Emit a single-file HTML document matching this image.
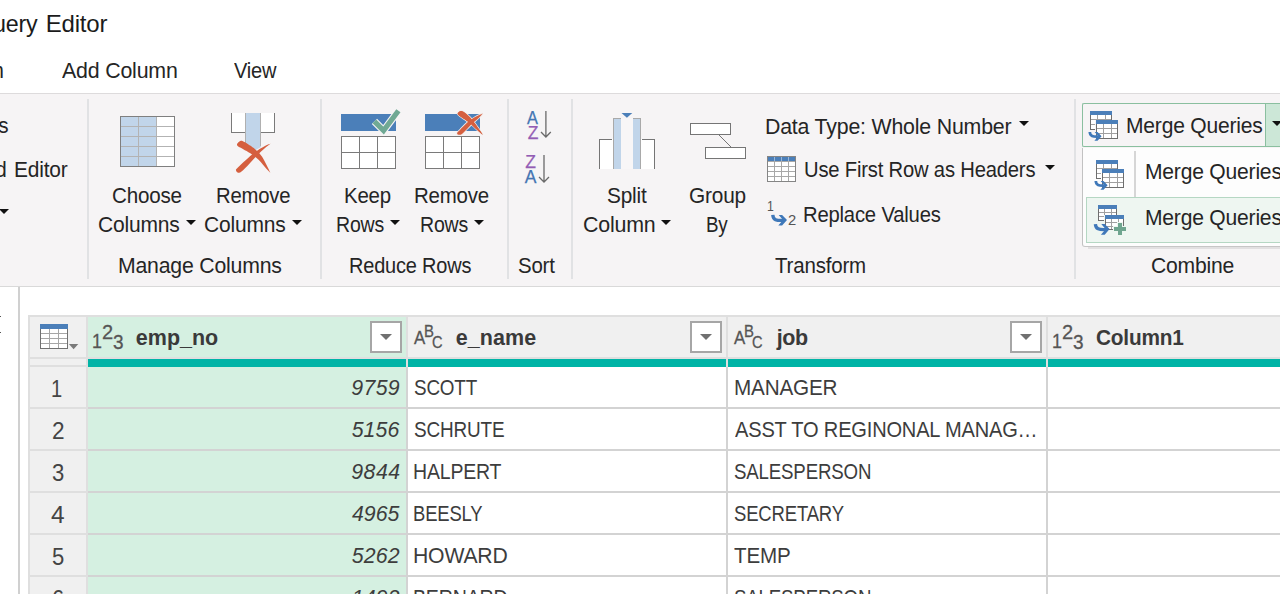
<!DOCTYPE html>
<html lang="en">
<head>
<meta charset="utf-8">
<title>Power Query Editor</title>
<style>
html,body{margin:0;padding:0;overflow:hidden;background:#fff;}
body{width:1280px;height:594px;}
#app{position:relative;width:1280px;height:594px;overflow:hidden;background:#fff;font-family:"Liberation Sans",sans-serif;}
.t{position:absolute;white-space:nowrap;line-height:1;transform-origin:0 0;}
.abs{position:absolute;}
#ribbon{left:0;top:93px;width:1280px;height:192px;background:#f6f4f5;border-top:1px solid #dddbdc;border-bottom:1px solid #d9d9d9;box-sizing:content-box;}
.vsep{position:absolute;top:99px;height:180px;width:2px;background:#e1e2e4;}
#leftline{left:18px;top:287px;width:2px;height:307px;background:#d0d0d0;}
#grid{left:28px;top:315px;width:1252px;height:279px;background:#dfdfdf;}
#gridh{left:88px;top:367px;width:1192px;height:227px;background:#d3d3d3;}
.hc{position:absolute;top:317px;height:40px;background:#f0f0f0;}
.cell{position:absolute;height:40px;background:#fff;}
.sel{background:#d5f0e1;}
.rh{position:absolute;left:30px;width:56px;height:40px;background:#f0f0f0;}
.dd{position:absolute;top:321px;width:28px;height:28px;border:2px solid #a6a6a6;background:#fff;}
.dd:after{content:"";position:absolute;left:8px;top:11px;border-left:6px solid transparent;border-right:6px solid transparent;border-top:6px solid #707070;}
.car{position:absolute;width:0;height:0;border-left:5px solid transparent;border-right:5px solid transparent;border-top:5px solid #111;}
</style>
</head>
<body>
<div id="app">
<div id="ribbon" class="abs"></div>
<div class="vsep" style="left:87px"></div>
<div class="vsep" style="left:320px"></div>
<div class="vsep" style="left:507px"></div>
<div class="vsep" style="left:571px"></div>
<div class="vsep" style="left:1074px"></div>
<div id="leftline" class="abs"></div>
<div class="abs" style="left:0;top:316px;width:1.3px;height:1.2px;background:#555"></div>
<div class="abs" style="left:0;top:332px;width:1.3px;height:1.2px;background:#555"></div>

<!-- merge queries split button + dropdown -->
<div class="abs" style="left:1082px;top:103px;width:198px;height:44px;box-sizing:border-box;border:1px solid #8abf9f;border-right:none;border-radius:2px 0 0 2px;background:#f6f4f5"></div>
<div class="abs" style="left:1265px;top:103px;width:15px;height:44px;box-sizing:border-box;border-top:1px solid #8abf9f;border-bottom:1px solid #8abf9f;border-left:1px solid #8abf9f;background:#cce7d7"></div>
<div class="abs" style="left:1088px;top:247px;width:192px;height:2px;background:#e2e0e1"></div>
<div class="abs" style="left:1082px;top:148px;width:210px;height:99px;box-sizing:border-box;background:#fdfdfd;border-left:1px solid #c2c2c2;border-bottom:1px solid #c6c6c6;border-radius:0 0 0 3px;"></div>
<div class="abs" style="left:1134px;top:151px;width:2px;height:46px;background:#d6d6d6"></div>
<div class="abs" style="left:1086px;top:197px;width:200px;height:46px;box-sizing:border-box;border:1px solid #b5d7c3;background:#eef6f1"></div>

<!-- data grid -->
<div id="grid" class="abs"></div>
<div id="gridh" class="abs"></div>
<div class="hc" style="left:30px;width:56px"></div>
<div class="hc sel" style="left:88px;width:318px"></div>
<div class="hc" style="left:408px;width:318px"></div>
<div class="hc" style="left:728px;width:318px"></div>
<div class="hc" style="left:1048px;width:232px"></div>
<div class="abs" style="left:30px;top:359px;width:56px;height:6px;background:#f0f0f0"></div>
<div class="abs" style="left:88px;top:359px;width:318px;height:8px;background:#00b4a6"></div>
<div class="abs" style="left:408px;top:359px;width:318px;height:8px;background:#00b4a6"></div>
<div class="abs" style="left:728px;top:359px;width:318px;height:8px;background:#00b4a6"></div>
<div class="abs" style="left:1048px;top:359px;width:232px;height:8px;background:#00b4a6"></div>
<div class="rh" style="top:367px"></div>
<div class="cell sel" style="left:88px;top:367px;width:318px"></div>
<div class="cell" style="left:408px;top:367px;width:318px"></div>
<div class="cell" style="left:728px;top:367px;width:318px"></div>
<div class="cell" style="left:1048px;top:367px;width:232px"></div>
<div class="rh" style="top:409px"></div>
<div class="cell sel" style="left:88px;top:409px;width:318px"></div>
<div class="cell" style="left:408px;top:409px;width:318px"></div>
<div class="cell" style="left:728px;top:409px;width:318px"></div>
<div class="cell" style="left:1048px;top:409px;width:232px"></div>
<div class="rh" style="top:451px"></div>
<div class="cell sel" style="left:88px;top:451px;width:318px"></div>
<div class="cell" style="left:408px;top:451px;width:318px"></div>
<div class="cell" style="left:728px;top:451px;width:318px"></div>
<div class="cell" style="left:1048px;top:451px;width:232px"></div>
<div class="rh" style="top:493px"></div>
<div class="cell sel" style="left:88px;top:493px;width:318px"></div>
<div class="cell" style="left:408px;top:493px;width:318px"></div>
<div class="cell" style="left:728px;top:493px;width:318px"></div>
<div class="cell" style="left:1048px;top:493px;width:232px"></div>
<div class="rh" style="top:535px"></div>
<div class="cell sel" style="left:88px;top:535px;width:318px"></div>
<div class="cell" style="left:408px;top:535px;width:318px"></div>
<div class="cell" style="left:728px;top:535px;width:318px"></div>
<div class="cell" style="left:1048px;top:535px;width:232px"></div>
<div class="rh" style="top:577px"></div>
<div class="cell sel" style="left:88px;top:577px;width:318px"></div>
<div class="cell" style="left:408px;top:577px;width:318px"></div>
<div class="cell" style="left:728px;top:577px;width:318px"></div>
<div class="cell" style="left:1048px;top:577px;width:232px"></div>
<div class="dd" style="left:370px"></div>
<div class="dd" style="left:690px"></div>
<div class="dd" style="left:1010px"></div>

<!-- carets -->
<div class="car" style="left:186px;top:220px"></div>
<div class="car" style="left:292px;top:220px"></div>
<div class="car" style="left:390px;top:220px"></div>
<div class="car" style="left:474px;top:220px"></div>
<div class="car" style="left:661px;top:220px"></div>
<div class="car" style="left:1018.5px;top:121px"></div>
<div class="car" style="left:1044.5px;top:165px"></div>
<div class="car" style="left:-1px;top:209px"></div>
<div class="car" style="left:1272.3px;top:121px"></div>

<svg class="abs" style="left:0;top:0" width="1280" height="594" viewBox="0 0 1280 594">
<g shape-rendering="crispEdges">
<!-- Choose Columns -->
<rect x="120" y="116" width="55" height="51" fill="#fff"/>
<rect x="120" y="116" width="37" height="51" fill="#c1d5ea"/>
<g stroke="#b3b3b3" stroke-width="1" fill="none">
<path d="M138.5 116V167M156.5 116V167M120 126.5H175M120 136.5H175M120 146.5H175M120 156.5H175"/>
</g>
<rect x="120.5" y="116.5" width="54" height="50" fill="none" stroke="#7f7f7f" stroke-width="1"/>

<!-- Remove Columns: boxes -->
<rect x="231" y="113" width="44" height="19.5" fill="#fff"/>
<path d="M231.5 113V132.5H274.5V113" fill="none" stroke="#7a7a7a" stroke-width="1"/>
</g>
<path d="M245 113H261V147L253 151.5L245 147Z" fill="#c1d5ea"/>
<path d="M245.5 113V146M260.5 113V146" stroke="#b0b0b0" stroke-width="1" fill="none"/>
<rect x="246" y="131.5" width="14" height="2" fill="#c1d5ea"/>
<!-- red X -->
<path d="M237.14 143.87C237.54 142.99 239.11 141.22 240.32 140.92C241.54 140.63 241.99 140.73 244.45 142.10C246.90 143.48 252.10 146.72 255.05 149.17C257.99 151.62 259.56 152.90 262.11 156.83C264.67 160.75 268.71 169.55 270.36 172.73C269.65 172.02 268.79 171.35 266.83 169.19C264.86 167.03 261.33 162.42 258.58 159.77C255.83 157.12 252.89 155.06 250.34 153.29C247.78 151.53 245.33 150.35 243.27 149.17C241.21 147.99 238.99 147.11 237.97 146.22C236.95 145.34 236.75 144.75 237.14 143.87Z" fill="#d55f3f"/>
<path d="M270.59 143.87C269.37 144.34 267.06 144.85 264.47 146.22C261.88 147.60 258.19 149.76 255.05 152.11C251.91 154.47 248.57 157.71 245.62 160.36C242.68 163.01 238.99 166.35 237.38 168.02C235.77 169.68 235.87 169.59 235.97 170.37C236.06 171.16 237.05 172.53 237.97 172.73C238.89 172.92 239.64 173.02 241.50 171.55C243.37 170.08 246.51 166.64 249.16 163.89C251.81 161.14 254.85 157.61 257.40 155.06C259.95 152.51 262.27 150.45 264.47 148.58C266.67 146.72 269.37 144.81 270.59 143.87Z" fill="#d55f3f"/>

<g shape-rendering="crispEdges">
<!-- Keep Rows -->
<rect x="341" y="114" width="55" height="17" fill="#4b7fb9"/>
<rect x="341.5" y="136.5" width="54" height="32" fill="#fff" stroke="#7a7a7a" stroke-width="1"/>
<path d="M359.5 136V169M377.5 136V169M341 152.5H396" stroke="#7a7a7a" stroke-width="1" fill="none"/>
<!-- Remove Rows -->
<rect x="425" y="114" width="55" height="17" fill="#4b7fb9"/>
<rect x="425.5" y="136.5" width="54" height="32" fill="#fff" stroke="#7a7a7a" stroke-width="1"/>
<path d="M443.5 136V169M461.5 136V169M425 152.5H480" stroke="#7a7a7a" stroke-width="1" fill="none"/>
</g>
<!-- check -->
<path d="M374.4 121.4L383.6 130.6L398.4 110.8" fill="none" stroke="#f6f4f5" stroke-width="7.4" stroke-linejoin="miter"/>
<path d="M374.4 121.4L383.6 130.6L398.4 110.8" fill="none" stroke="#70a994" stroke-width="5.2" stroke-linejoin="miter"/>
<!-- red X small -->
<path d="M457.64 113.55C457.64 112.66 459.41 111.48 460.35 111.19C461.29 110.90 461.62 110.70 463.29 111.78C464.96 112.86 468.20 115.41 470.36 117.67C472.52 119.93 474.19 122.48 476.25 125.32C478.31 128.17 481.43 132.86 482.73 134.75C482.02 134.16 481.06 133.47 479.19 131.80C477.33 130.13 473.79 126.70 471.54 124.73C469.28 122.77 467.51 121.40 465.65 120.02C463.78 118.65 461.68 117.57 460.35 116.49C459.01 115.41 457.64 114.43 457.64 113.55Z" fill="#d55f3f" stroke="#f1e9e6" stroke-width="1.6" paint-order="stroke"/>
<path d="M482.73 113.55C481.20 114.25 477.72 115.51 475.07 117.08C472.42 118.65 469.28 120.91 466.83 122.97C464.37 125.03 461.96 127.78 460.35 129.45C458.74 131.12 457.46 132.10 457.17 132.98C456.87 133.86 457.80 134.59 458.58 134.75C459.37 134.90 460.39 134.98 461.88 133.92C463.37 132.86 465.61 130.27 467.53 128.39C469.46 126.50 471.48 124.42 473.42 122.61C475.37 120.81 477.64 119.06 479.19 117.55C480.74 116.04 482.02 114.35 482.73 113.55Z" fill="#d55f3f" stroke="#f1e9e6" stroke-width="1.6" paint-order="stroke"/>
<path d="M457.64 113.55C457.64 112.66 459.41 111.48 460.35 111.19C461.29 110.90 461.62 110.70 463.29 111.78C464.96 112.86 468.20 115.41 470.36 117.67C472.52 119.93 474.19 122.48 476.25 125.32C478.31 128.17 481.43 132.86 482.73 134.75C482.02 134.16 481.06 133.47 479.19 131.80C477.33 130.13 473.79 126.70 471.54 124.73C469.28 122.77 467.51 121.40 465.65 120.02C463.78 118.65 461.68 117.57 460.35 116.49C459.01 115.41 457.64 114.43 457.64 113.55Z" fill="#d55f3f"/>

<!-- Sort arrows -->
<g stroke="#6a6a6a" stroke-width="1.3" fill="none">
<path d="M545.9 111V136.8M541 132L545.9 137L550.8 132"/>
<path d="M544 155V181.8M539 177L544 182L549 177"/>
</g>

<!-- Split Column -->
<path d="M621.5 113H632.3L626.9 117.8Z" fill="#4b7fb9"/>
<g shape-rendering="crispEdges">
<rect x="599" y="139" width="14" height="29.5" fill="#fff"/>
<rect x="641" y="139" width="14" height="29.5" fill="#fff"/>
<rect x="613" y="118" width="8" height="50.5" fill="#c1d5ea"/>
<rect x="633" y="118" width="8" height="50.5" fill="#c1d5ea"/>
<rect x="621" y="118" width="12" height="50.5" fill="#f8f6f7"/>
<path d="M599.5 168.5V139.5H612M642 139.5H654.5V168.5" fill="none" stroke="#757575" stroke-width="1"/>
<path d="M613.5 168.5V118.5H621M633 118.5H640.5V168.5" fill="none" stroke="#a9a9a9" stroke-width="1"/>
<!-- Group By -->
<rect x="690.5" y="123.5" width="40" height="11" fill="#fff" stroke="#757575" stroke-width="1"/>
<rect x="705.5" y="147.5" width="40" height="11" fill="#fff" stroke="#757575" stroke-width="1"/>
</g>
<path d="M719 135L731 147" stroke="#757575" stroke-width="1" fill="none"/>

<!-- Use first row as headers -->
<g shape-rendering="crispEdges">
<rect x="767" y="156" width="29" height="26" fill="#fff"/>
<rect x="767" y="156" width="29" height="5" fill="#4b7fb9"/>
<path d="M774.5 156V182M781.5 156V182M788.5 156V182M767 161.5H796M767 166.500H796M767 171.5H796M767 176.5H796" stroke="#a8a8a8" stroke-width="1" fill="none"/>
<rect x="767.500" y="156.500" width="28" height="25" fill="none" stroke="#858585" stroke-width="1"/>
<rect x="768" y="157" width="27" height="4" fill="none"/>
</g>
<path d="M774.5 157V161M781.5 157V161M788.5 157V161" stroke="#9ab6d8" stroke-width="1" fill="none" shape-rendering="crispEdges"/>


<g shape-rendering="crispEdges">
<rect x="1090" y="111" width="22" height="18.5" fill="#fff"/>
<rect x="1090" y="111" width="22" height="4" fill="#4b7fb9"/>
<path d="M1097.5 115V129.5M1105.5 115V129.5M1090 119.5H1112M1090 124.5H1112" stroke="#a0a0a0" stroke-width="1" fill="none"/>
<path d="M1090.5 115V129.5H1111.5V115" stroke="#6e6e6e" stroke-width="1" fill="none"/>
<rect x="1095" y="120" width="24" height="19.5" fill="#f6f4f5"/>
<rect x="1096" y="120" width="22" height="18.5" fill="#fff"/>
<rect x="1096" y="120" width="22" height="4" fill="#4b7fb9"/>
<path d="M1103.5 124V138.5M1111.5 124V138.5M1096 128.5H1118M1096 133.5H1118" stroke="#a0a0a0" stroke-width="1" fill="none"/>
<path d="M1096.5 124V138.5H1117.5V124" stroke="#6e6e6e" stroke-width="1" fill="none"/>
</g>
<path d="M1089.81 132.05C1089.98 136.12 1092.80 136.95 1098.61 136.61" fill="none" stroke="#3f78b9" stroke-width="2.74"/>
<path d="M1094.71 132.05L1097.53 132.05L1101.60 136.20L1097.53 140.85L1094.38 140.85L1098.28 136.37Z" fill="#3f78b9"/>
<g shape-rendering="crispEdges">
<rect x="1096" y="160" width="22" height="18.5" fill="#fff"/>
<rect x="1096" y="160" width="22" height="4" fill="#4b7fb9"/>
<path d="M1103.5 164V178.5M1111.5 164V178.5M1096 168.5H1118M1096 173.5H1118" stroke="#a0a0a0" stroke-width="1" fill="none"/>
<path d="M1096.5 164V178.5H1117.5V164" stroke="#6e6e6e" stroke-width="1" fill="none"/>
<rect x="1101" y="169" width="24" height="19.5" fill="#fdfdfd"/>
<rect x="1102" y="169" width="22" height="18.5" fill="#fff"/>
<rect x="1102" y="169" width="22" height="4" fill="#4b7fb9"/>
<path d="M1109.5 173V187.5M1117.5 173V187.5M1102 177.5H1124M1102 182.5H1124" stroke="#a0a0a0" stroke-width="1" fill="none"/>
<path d="M1102.5 173V187.5H1123.5V173" stroke="#6e6e6e" stroke-width="1" fill="none"/>
</g>
<path d="M1095.81 181.05C1095.98 185.12 1098.80 185.95 1104.61 185.61" fill="none" stroke="#3f78b9" stroke-width="2.74"/>
<path d="M1100.71 181.05L1103.53 181.05L1107.60 185.20L1103.53 189.85L1100.38 189.85L1104.28 185.37Z" fill="#3f78b9"/>
<g shape-rendering="crispEdges">
<rect x="1098" y="205" width="19" height="15.5" fill="#fff"/>
<rect x="1098" y="205" width="19" height="4" fill="#4b7fb9"/>
<path d="M1104.5 209V220.5M1111.5 209V220.5M1098 212.5H1117M1098 216.5H1117" stroke="#a0a0a0" stroke-width="1" fill="none"/>
<path d="M1098.5 209V220H1116.5V209" stroke="#6e6e6e" stroke-width="1" fill="none"/>
<rect x="1104" y="215" width="21" height="16" fill="#eef6f1"/>
<rect x="1105" y="215" width="19" height="15" fill="#fff"/>
<rect x="1105" y="215" width="19" height="4" fill="#4b7fb9"/>
<path d="M1111.5 219V230M1118.5 219V230M1105 222.5H1124M1105 226.5H1124" stroke="#a0a0a0" stroke-width="1" fill="none"/>
<path d="M1105.5 219V229.5H1123.5V219" stroke="#6e6e6e" stroke-width="1" fill="none"/>
<rect x="1117.2" y="222" width="6" height="14" fill="#eef6f1"/>
<rect x="1113.2" y="226" width="14" height="6" fill="#eef6f1"/>
<rect x="1118.2" y="223" width="4" height="12" fill="#6fa58f"/>
<rect x="1114.2" y="227" width="12" height="4" fill="#6fa58f"/>
</g>
<path d="M1095.40 224.10C1095.60 229.00 1099.00 230.00 1106.00 229.60" fill="none" stroke="#3f78b9" stroke-width="3.30"/>
<path d="M1101.30 224.10L1104.70 224.10L1109.60 229.10L1104.70 234.70L1100.90 234.70L1105.60 229.30Z" fill="#3f78b9"/>
<g shape-rendering="crispEdges">
<rect x="40" y="324" width="28" height="25" fill="#fff"/>
<rect x="40" y="324" width="28" height="5" fill="#4b7fb9"/>
<path d="M49.5 329V349M58.5 329V349M40 333.5H68M40 338.5H68M40 343.5H68" stroke="#a6a6a6" stroke-width="1" fill="none"/>
<path d="M40.5 329V348.500H67.500V329" stroke="#707070" stroke-width="1" fill="none"/>
</g>
<path d="M68.900 344H78.300L73.600 349.200Z" fill="#7a7a7a"/>
<path d="M772.80 214.90C773.00 219.80 776.40 220.80 783.40 220.40" fill="none" stroke="#3f78b9" stroke-width="3.30"/>
<path d="M778.70 214.90L782.10 214.90L787.00 219.90L782.10 225.50L778.30 225.50L783.00 220.10Z" fill="#3f78b9"/>
</svg>
<span class="t" style="left:45.73px;top:11.5px;font-size:24px;color:#1b1b1b;letter-spacing:-0.181px;">Editor</span>
<span class="t" style="left:-24.72px;top:11.5px;font-size:24px;color:#1b1b1b;letter-spacing:-0.2px;transform:scaleX(0.97);">Query</span>
<span class="t" style="left:61.6px;top:59.7px;font-size:22px;color:#252525;letter-spacing:-0.2px;transform:scaleX(0.9709);">Add Column</span>
<span class="t" style="left:233.7px;top:59.7px;font-size:22px;color:#252525;letter-spacing:-0.2px;transform:scaleX(0.9115);">View</span>
<span class="t" style="left:-89.05px;top:59.7px;font-size:22px;color:#252525;letter-spacing:-0.2px;transform:scaleX(0.95);">Transform</span>
<span class="t" style="left:-83.61px;top:115.2px;font-size:22px;color:#252525;letter-spacing:-0.2px;transform:scaleX(0.94);">Properties</span>
<span class="t" style="left:14.37px;top:159.4px;font-size:22px;color:#252525;letter-spacing:-0.2px;transform:scaleX(0.9498);">Editor</span>
<span class="t" style="left:-84.3px;top:159.4px;font-size:22px;color:#252525;letter-spacing:-0.2px;transform:scaleX(0.94);">Advanced</span>
<span class="t" style="left:112.44px;top:184.6px;font-size:22px;color:#252525;letter-spacing:-0.2px;transform:scaleX(0.9354);">Choose</span>
<span class="t" style="left:98.32px;top:214.4px;font-size:22px;color:#252525;letter-spacing:-0.2px;transform:scaleX(0.9548);">Columns</span>
<span class="t" style="left:215.72px;top:184.6px;font-size:22px;color:#252525;letter-spacing:-0.2px;transform:scaleX(0.9207);">Remove</span>
<span class="t" style="left:204.27px;top:214.4px;font-size:22px;color:#252525;letter-spacing:-0.2px;transform:scaleX(0.9542);">Columns</span>
<span class="t" style="left:118.34px;top:254.7px;font-size:22px;color:#252525;letter-spacing:-0.2px;transform:scaleX(0.9653);">Manage Columns</span>
<span class="t" style="left:344.41px;top:184.6px;font-size:22px;color:#252525;letter-spacing:-0.2px;transform:scaleX(0.928);">Keep</span>
<span class="t" style="left:335.78px;top:214.4px;font-size:22px;color:#252525;letter-spacing:-0.2px;transform:scaleX(0.8865);">Rows</span>
<span class="t" style="left:414.3px;top:184.6px;font-size:22px;color:#252525;letter-spacing:-0.2px;transform:scaleX(0.9284);">Remove</span>
<span class="t" style="left:419.68px;top:214.4px;font-size:22px;color:#252525;letter-spacing:-0.2px;transform:scaleX(0.8865);">Rows</span>
<span class="t" style="left:349.44px;top:254.7px;font-size:22px;color:#252525;letter-spacing:-0.2px;transform:scaleX(0.9076);">Reduce Rows</span>
<span class="t" style="left:518.06px;top:254.7px;font-size:22px;color:#252525;letter-spacing:-0.2px;transform:scaleX(0.9276);">Sort</span>
<span class="t" style="left:606.95px;top:184.6px;font-size:22px;color:#252525;letter-spacing:-0.2px;transform:scaleX(0.9472);">Split</span>
<span class="t" style="left:582.8px;top:214.4px;font-size:22px;color:#252525;letter-spacing:-0.2px;transform:scaleX(0.9719);">Column</span>
<span class="t" style="left:688.82px;top:184.6px;font-size:22px;color:#252525;letter-spacing:-0.2px;transform:scaleX(0.9466);">Group</span>
<span class="t" style="left:706.23px;top:214.4px;font-size:22px;color:#252525;letter-spacing:-0.2px;transform:scaleX(0.8546);">By</span>
<span class="t" style="left:765.13px;top:115.5px;font-size:22px;color:#252525;letter-spacing:-0.2px;transform:scaleX(0.9692);">Data Type: Whole Number</span>
<span class="t" style="left:803.54px;top:159.4px;font-size:22px;color:#252525;letter-spacing:-0.2px;transform:scaleX(0.9181);">Use First Row as Headers</span>
<span class="t" style="left:803.22px;top:203.5px;font-size:22px;color:#252525;letter-spacing:-0.2px;transform:scaleX(0.9196);">Replace Values</span>
<span class="t" style="left:774.88px;top:254.7px;font-size:22px;color:#252525;letter-spacing:-0.2px;transform:scaleX(0.9321);">Transform</span>
<span class="t" style="left:1126.16px;top:115.4px;font-size:22px;color:#252525;letter-spacing:-0.2px;transform:scaleX(0.956);">Merge Queries</span>
<span class="t" style="left:1144.76px;top:160.9px;font-size:22px;color:#252525;letter-spacing:-0.2px;transform:scaleX(0.9567);">Merge Queries</span>
<span class="t" style="left:1144.76px;top:206.5px;font-size:22px;color:#252525;letter-spacing:-0.2px;transform:scaleX(0.9567);">Merge Queries</span>
<span class="t" style="left:1150.81px;top:254.7px;font-size:22px;color:#252525;letter-spacing:-0.2px;transform:scaleX(0.9597);">Combine</span>
<span class="t" style="left:527.2px;top:109.6px;font-size:17.5px;color:#4576b3;transform:scaleX(0.9355);-webkit-text-stroke:0.25px #4576b3;">A</span>
<span class="t" style="left:527.63px;top:124.7px;font-size:17.5px;color:#935cb4;-webkit-text-stroke:0.25px #935cb4;">Z</span>
<span class="t" style="left:525.33px;top:153.7px;font-size:17.5px;color:#935cb4;-webkit-text-stroke:0.25px #935cb4;">Z</span>
<span class="t" style="left:524.82px;top:168.8px;font-size:17.5px;color:#4576b3;-webkit-text-stroke:0.25px #4576b3;">A</span>
<span class="t" style="left:767.27px;top:198.6px;font-size:14px;color:#555;transform:scaleX(0.8742);">1</span>
<span class="t" style="left:788.47px;top:213.4px;font-size:14px;color:#555;transform:scaleX(1.0563);">2</span>
<span class="t" style="left:135.83px;top:327.9px;font-size:21.5px;color:#3a3a3a;letter-spacing:-0.011px;font-weight:bold;">emp_no</span>
<span class="t" style="left:455.73px;top:327.9px;font-size:21.5px;color:#3a3a3a;letter-spacing:0.086px;font-weight:bold;">e_name</span>
<span class="t" style="left:776.64px;top:327.9px;font-size:21.5px;color:#3a3a3a;letter-spacing:-0.336px;font-weight:bold;">job</span>
<span class="t" style="left:1096.35px;top:327.9px;font-size:21.5px;color:#3a3a3a;letter-spacing:-0.2px;transform:scaleX(0.968);font-weight:bold;">Column1</span>
<span class="t" style="left:91.74px;top:329.8px;font-size:21px;color:#555555;transform:scaleX(0.85);-webkit-text-stroke:0.3px #555;">1</span>
<span class="t" style="left:101.86px;top:320.9px;font-size:21px;color:#555555;transform:scaleX(0.9549);-webkit-text-stroke:0.3px #555;">2</span>
<span class="t" style="left:112.61px;top:331.0px;font-size:21px;color:#555555;transform:scaleX(0.9045);-webkit-text-stroke:0.3px #555;">3</span>
<span class="t" style="left:1051.74px;top:329.8px;font-size:21px;color:#555555;transform:scaleX(0.85);-webkit-text-stroke:0.3px #555;">1</span>
<span class="t" style="left:1061.86px;top:320.9px;font-size:21px;color:#555555;transform:scaleX(0.9549);-webkit-text-stroke:0.3px #555;">2</span>
<span class="t" style="left:1072.61px;top:331.0px;font-size:21px;color:#555555;transform:scaleX(0.9045);-webkit-text-stroke:0.3px #555;">3</span>
<span class="t" style="left:413.5px;top:329.8px;font-size:17.6px;color:#555555;transform:scaleX(0.9556);-webkit-text-stroke:0.3px #555;">A</span>
<span class="t" style="left:424.11px;top:323.5px;font-size:15.6px;color:#555555;transform:scaleX(0.9552);-webkit-text-stroke:0.3px #555;">B</span>
<span class="t" style="left:431.88px;top:334.1px;font-size:17.2px;color:#555555;transform:scaleX(0.85);-webkit-text-stroke:0.3px #555;">C</span>
<span class="t" style="left:733.5px;top:329.8px;font-size:17.6px;color:#555555;transform:scaleX(0.9556);-webkit-text-stroke:0.3px #555;">A</span>
<span class="t" style="left:744.11px;top:323.5px;font-size:15.6px;color:#555555;transform:scaleX(0.9552);-webkit-text-stroke:0.3px #555;">B</span>
<span class="t" style="left:751.88px;top:334.1px;font-size:17.2px;color:#555555;transform:scaleX(0.85);-webkit-text-stroke:0.3px #555;">C</span>
<span class="t" style="left:351.33px;top:377.7px;font-size:21.3px;color:#3d3d3d;letter-spacing:0.326px;font-style:italic;">9759</span>
<span class="t" style="left:414.01px;top:376.7px;font-size:22px;color:#3d3d3d;letter-spacing:-0.2px;transform:scaleX(0.8571);">SCOTT</span>
<span class="t" style="left:734.18px;top:376.7px;font-size:22px;color:#3d3d3d;letter-spacing:-0.2px;transform:scaleX(0.94);">MANAGER</span>
<span class="t" style="left:51.43px;top:378.2px;font-size:23.7px;color:#444;transform:scaleX(0.85);">1</span>
<span class="t" style="left:351.67px;top:419.7px;font-size:21.3px;color:#3d3d3d;letter-spacing:0.104px;font-style:italic;">5156</span>
<span class="t" style="left:414.01px;top:418.7px;font-size:22px;color:#3d3d3d;letter-spacing:-0.2px;transform:scaleX(0.8611);">SCHRUTE</span>
<span class="t" style="left:735.0px;top:418.7px;font-size:22px;color:#3d3d3d;letter-spacing:-0.2px;transform:scaleX(0.9116);">ASST TO REGINONAL MANAG…</span>
<span class="t" style="left:51.64px;top:420.2px;font-size:23.7px;color:#444;transform:scaleX(0.9541);">2</span>
<span class="t" style="left:351.33px;top:461.7px;font-size:21.3px;color:#3d3d3d;letter-spacing:0.437px;font-style:italic;">9844</span>
<span class="t" style="left:413.08px;top:460.7px;font-size:22px;color:#3d3d3d;letter-spacing:-0.2px;transform:scaleX(0.8862);">HALPERT</span>
<span class="t" style="left:734.42px;top:460.7px;font-size:22px;color:#3d3d3d;letter-spacing:-0.2px;transform:scaleX(0.849);">SALESPERSON</span>
<span class="t" style="left:51.81px;top:462.2px;font-size:23.7px;color:#444;transform:scaleX(0.9321);">3</span>
<span class="t" style="left:352.0px;top:503.7px;font-size:21.3px;color:#3d3d3d;letter-spacing:-0.006px;font-style:italic;">4965</span>
<span class="t" style="left:413.16px;top:502.7px;font-size:22px;color:#3d3d3d;letter-spacing:-0.2px;transform:scaleX(0.8381);">BEESLY</span>
<span class="t" style="left:734.42px;top:502.7px;font-size:22px;color:#3d3d3d;letter-spacing:-0.2px;transform:scaleX(0.8409);">SECRETARY</span>
<span class="t" style="left:50.92px;top:504.2px;font-size:23.7px;color:#444;transform:scaleX(1.0311);">4</span>
<span class="t" style="left:351.67px;top:545.7px;font-size:21.3px;color:#3d3d3d;letter-spacing:0.215px;font-style:italic;">5262</span>
<span class="t" style="left:412.94px;top:544.7px;font-size:22px;color:#3d3d3d;letter-spacing:-0.2px;transform:scaleX(0.9633);">HOWARD</span>
<span class="t" style="left:734.18px;top:544.7px;font-size:22px;color:#3d3d3d;letter-spacing:-0.2px;transform:scaleX(0.9368);">TEMP</span>
<span class="t" style="left:51.81px;top:546.2px;font-size:23.7px;color:#444;transform:scaleX(0.9321);">5</span>
<span class="t" style="left:351.67px;top:587.7px;font-size:21.3px;color:#3d3d3d;letter-spacing:0.215px;font-style:italic;">1492</span>
<span class="t" style="left:413.07px;top:586.7px;font-size:22px;color:#3d3d3d;letter-spacing:-0.2px;transform:scaleX(0.8894);">BERNARD</span>
<span class="t" style="left:734.42px;top:586.7px;font-size:22px;color:#3d3d3d;letter-spacing:-0.2px;transform:scaleX(0.849);">SALESPERSON</span>
<span class="t" style="left:51.98px;top:588.2px;font-size:23.7px;color:#444;transform:scaleX(0.9181);">6</span>
</div>
</body>
</html>
